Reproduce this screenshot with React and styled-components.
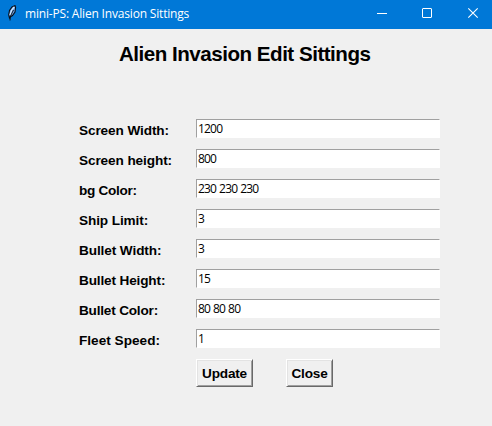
import React from 'react';
import styled, { createGlobalStyle } from 'styled-components';

const GlobalStyle = createGlobalStyle`
  * { box-sizing: border-box; }
  body { margin: 0; background: #f0f0f0; overflow: hidden; }
`;

const Window = styled.main`
  width: 492px;
  height: 426px;
  background: #f0f0f0;
  color: #000;
  font-family: "Liberation Sans", Arial, sans-serif;
`;

const TitleBar = styled.header`
  display: flex;
  height: 29px;
  background: #0078d7;
  color: #fff;
`;

const FeatherIcon = styled.svg`
  flex: none;
  width: 10px;
  height: 16px;
  margin: 5px 8px 0 7px;
`;

const WindowTitle = styled.span`
  flex: 1;
  font: 12px/28px "Open Sans", sans-serif;
  letter-spacing: -0.18px;
  white-space: nowrap;
`;

const Caption = styled.svg`
  flex: none;
  width: 46px;
  height: 29px;
  fill: none;
  stroke: #fff;
`;

const Heading = styled.h1`
  margin: 0;
  padding: 13px 0 0 119px;
  height: 90px;
  font-size: 20.6px;
  line-height: 24px;
  letter-spacing: -0.5px;
  white-space: nowrap;
`;

const Field = styled.label`
  display: flex;
  height: 30px;
  padding-left: 79px;
`;

const FieldName = styled.span`
  width: 117px;
  padding-top: 1px;
  font-size: 13.6px;
  font-weight: bold;
  line-height: 22px;
  letter-spacing: ${(p) => p.$tracking}px;
  white-space: nowrap;
`;

const Entry = styled.input`
  width: 244px;
  height: 19px;
  padding: 0 1px;
  border: 1px solid #fff;
  border-top-color: #a0a0a0;
  border-left-color: #a0a0a0;
  border-radius: 0;
  outline: none;
  background: #fff;
  color: #000;
  font: 12px/17px "Open Sans", sans-serif;
  letter-spacing: -0.8px;
  word-spacing: 0.6px;
`;

const Actions = styled.div`
  display: flex;
  gap: 33px;
  padding-left: 196px;
`;

const Button = styled.button`
  width: ${(p) => p.$width}px;
  height: 28px;
  padding: 0;
  border: 1px solid #fff;
  border-right-color: #696969;
  border-bottom-color: #696969;
  border-radius: 0;
  box-shadow: inset 1px 1px #e3e3e3, inset -1px -1px #a0a0a0;
  background: #f0f0f0;
  color: #000;
  font: bold 13.6px "Liberation Sans", Arial, sans-serif;
  letter-spacing: -0.2px;
`;

const fields = [
  { name: 'Screen Width:', value: '1200', tracking: -0.1 },
  { name: 'Screen height:', value: '800', tracking: -0.1 },
  { name: 'bg Color:', value: '230 230 230', tracking: -0.3 },
  { name: 'Ship Limit:', value: '3', tracking: -0.1 },
  { name: 'Bullet Width:', value: '3', tracking: -0.1 },
  { name: 'Bullet Height:', value: '15', tracking: -0.15 },
  { name: 'Bullet Color:', value: '80 80 80', tracking: -0.2 },
  { name: 'Fleet Speed:', value: '1', tracking: 0.02 },
];

export default function App() {
  return (
    <Window>
      <GlobalStyle />
      <TitleBar>
        <FeatherIcon viewBox="0 0 10 16">
          <path d="M2.5 13 1.7 9.8 2.5 5.5 5 2 8 .6 8.6 2.5 8 7 5.5 10.5 3 12z" fill="#6fa5e6" stroke="#080c14" strokeWidth="1.1" />
          <path d="M7.2 1.8 4.5 5.5 3 10" fill="none" stroke="#d9ecff" strokeWidth="1.2" />
          <path d="M6.5 5 3.5 11 3 15.5" fill="none" stroke="#080c14" strokeWidth="0.9" />
        </FeatherIcon>
        <WindowTitle>mini-PS: Alien Invasion Sittings</WindowTitle>
        <Caption viewBox="0 0 46 29"><path d="M23 13.5h10" /></Caption>
        <Caption viewBox="0 0 46 29"><rect x="22.5" y="8.5" width="9" height="9" rx="0.5" /></Caption>
        <Caption viewBox="0 0 46 29"><path d="M22.3 8.3l9.4 9.4M31.7 8.3l-9.4 9.4" strokeWidth="1.1" /></Caption>
      </TitleBar>
      <Heading>Alien Invasion Edit Sittings</Heading>
      {fields.map(({ name, value, tracking }) => (
        <Field key={name}>
          <FieldName $tracking={tracking}>{name}</FieldName>
          <Entry defaultValue={value} />
        </Field>
      ))}
      <Actions>
        <Button $width={57}>Update</Button>
        <Button $width={47}>Close</Button>
      </Actions>
    </Window>
  );
}
